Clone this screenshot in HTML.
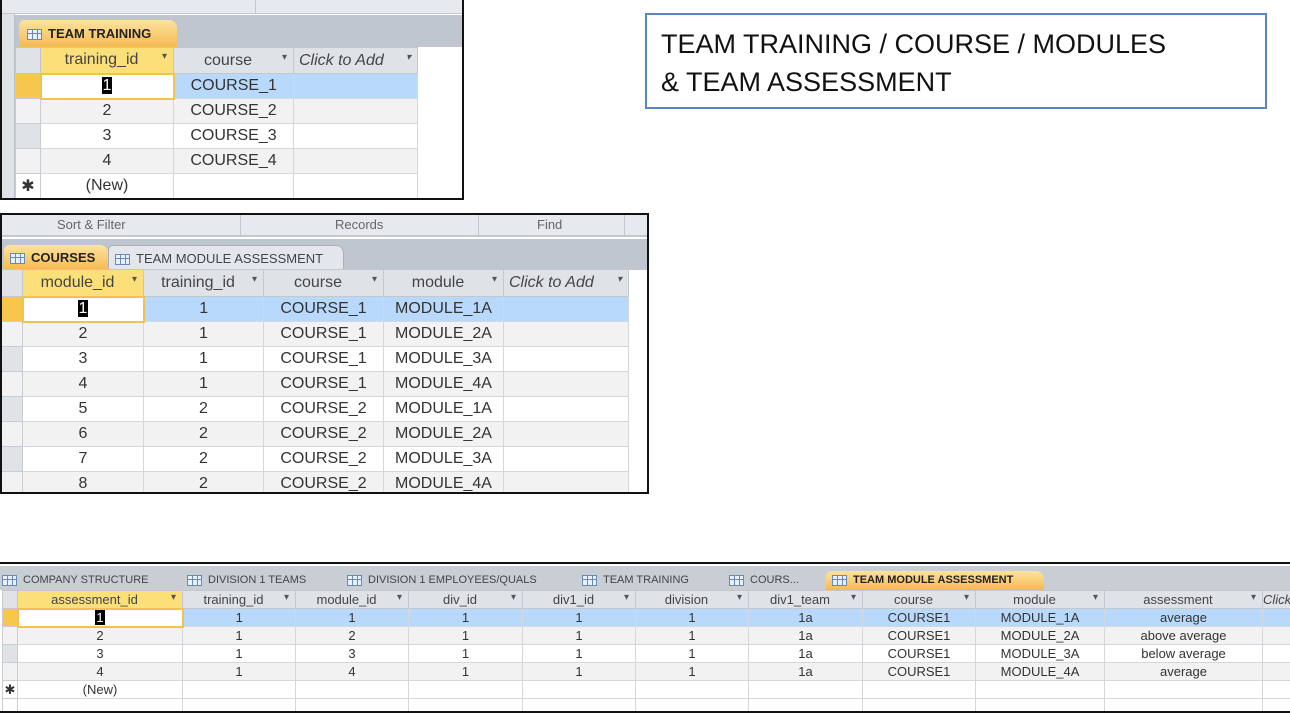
<!DOCTYPE html>
<html><head><meta charset="utf-8"><style>
*{margin:0;padding:0;box-sizing:border-box}
body{width:1290px;height:713px;background:#fff;position:relative;overflow:hidden;font-family:"Liberation Sans",sans-serif;color:#333}
.p{position:absolute;border:2px solid #111;overflow:hidden;background:#fff}
.a{position:absolute}
table{border-collapse:collapse;table-layout:fixed;position:absolute}
td{border:1px solid #d4d8dd;text-align:center;white-space:nowrap;overflow:hidden;padding:0}
tr.h td{background:#dfe3e8;border-color:#c4c8ce;color:#444}
tr.h td.y{background:#fbe07a}
tr.s td{background:#b8d9fb}
tr.s td.w{background:#fff;border:2px solid #f2c24e}
tr.g td{background:#f2f2f2}
td.sel{background:#dfe3e8;border-color:#c9cdd3}
tr.s td.sel{background:#f7c64d}
.dd{font-size:10px;color:#555;float:right;margin-right:6px}
.ico{display:inline-block;width:15px;height:11px;border:1px solid #6a8ab5;background:
linear-gradient(#6a8ab5 0 0) 0 3px/100% 1px no-repeat,linear-gradient(#6a8ab5 0 0) 4px 0/1px 100% no-repeat,linear-gradient(#6a8ab5 0 0) 9px 0/1px 100% no-repeat,#e8f0fb;vertical-align:middle;margin-right:6px}
.tabrow{position:absolute;background:#bfc6cf}
.tab{position:absolute;font-weight:bold;color:#222;white-space:nowrap;border-radius:5px 8px 0 0}
.tab.on{background:linear-gradient(#fce3a0,#f6b94f)}
.tab.off{background:#e3e7ec;font-weight:normal;color:#444;border:1px solid #a9b0ba;border-bottom:none}
.cur{background:#000;color:#fff;padding:0 1px}
</style></head><body>

<!-- Panel 1 -->
<div class="p" style="left:0;top:-2px;width:464px;height:202px">
  <div class="a" style="left:0;top:0;width:464px;height:14px;background:#e6e9ed;border-bottom:1px solid #c4c8ce"></div>
  <div class="a" style="left:253px;top:0;width:1px;height:14px;background:#c4c8ce"></div>
  <div class="a" style="left:0;top:14px;width:13px;height:190px;background:#dfe3e8;border-right:1px solid #b8bec6"></div>
  <div class="tabrow" style="left:13px;top:15px;width:451px;height:32px"></div>
  <div class="tab on" style="left:17px;top:20px;width:158px;height:27px;font-size:13px;line-height:27px;padding-left:8px"><span class="ico"></span>TEAM TRAINING</div>
  <table style="left:13px;top:47px;font-size:16px;width:462px">
    <colgroup><col style="width:25px"><col style="width:133px"><col style="width:120px"><col style="width:124px"><col style="width:60px"></colgroup>
    <tr class="h" style="height:26px"><td class="sel"></td><td class="y">training_id <span class="dd">▾</span></td><td>course <span class="dd">▾</span></td><td style="text-align:left;padding-left:5px;font-style:italic">Click to Add <span class="dd">▾</span></td><td style="background:#fff;border:none"></td></tr>
    <tr class="s" style="height:25px"><td class="sel"></td><td class="w"><span class="cur">1</span></td><td>COURSE_1</td><td></td><td style="background:#fff;border:none"></td></tr>
    <tr class="g" style="height:25px"><td class="sel"></td><td>2</td><td>COURSE_2</td><td></td><td style="background:#fff;border:none"></td></tr>
    <tr style="height:25px"><td class="sel"></td><td>3</td><td>COURSE_3</td><td></td><td style="border:none"></td></tr>
    <tr class="g" style="height:25px"><td class="sel"></td><td>4</td><td>COURSE_4</td><td></td><td style="background:#fff;border:none"></td></tr>
    <tr style="height:25px"><td class="sel" style="background:#fff">✱</td><td>(New)</td><td></td><td></td><td style="border:none"></td></tr>
  </table>
</div>

<!-- Title box -->
<div class="a" style="left:645px;top:13px;width:622px;height:96px;border:2px solid #5b84c0;font-size:27px;color:#111;letter-spacing:0;line-height:38px;padding:10px 0 0 14px">TEAM TRAINING / COURSE / MODULES<br>&amp; TEAM ASSESSMENT</div>

<!-- Panel 2 -->
<div class="p" style="left:0;top:213px;width:649px;height:281px">
  <div class="a" style="left:0;top:0;width:649px;height:22px;background:#e6e9ed;border-bottom:2px solid #c4c8ce;font-size:13px;color:#666;line-height:20px">
    <span class="a" style="left:55px">Sort &amp; Filter</span><span class="a" style="left:333px">Records</span><span class="a" style="left:535px">Find</span>
  </div>
  <div class="a" style="left:238px;top:0;width:1px;height:22px;background:#c4c8ce"></div>
  <div class="a" style="left:476px;top:0;width:1px;height:22px;background:#c4c8ce"></div>
  <div class="a" style="left:622px;top:0;width:1px;height:22px;background:#c4c8ce"></div>
  <div class="tabrow" style="left:0;top:24px;width:649px;height:31px"></div>
  <div class="tab on" style="left:2px;top:30px;width:104px;height:25px;font-size:13px;line-height:25px;padding-left:6px"><span class="ico"></span>COURSES</div>
  <div class="tab off" style="left:106px;top:30px;width:236px;height:25px;font-size:13px;line-height:25px;padding-left:6px"><span class="ico"></span>TEAM MODULE ASSESSMENT</div>
  <table style="left:-2px;top:54px;font-size:16px;width:653px">
    <colgroup><col style="width:22px"><col style="width:121px"><col style="width:120px"><col style="width:120px"><col style="width:120px"><col style="width:125px"><col style="width:25px"></colgroup>
    <tr class="h" style="height:27px"><td class="sel"></td><td class="y">module_id <span class="dd">▾</span></td><td>training_id <span class="dd">▾</span></td><td>course <span class="dd">▾</span></td><td>module <span class="dd">▾</span></td><td style="text-align:left;padding-left:5px;font-style:italic">Click to Add <span class="dd">▾</span></td><td style="background:#fff;border:none"></td></tr>
    <tr class="s" style="height:25px"><td class="sel"></td><td class="w"><span class="cur">1</span></td><td>1</td><td>COURSE_1</td><td>MODULE_1A</td><td></td><td style="background:#fff;border:none"></td></tr>
    <tr class="g" style="height:25px"><td class="sel"></td><td>2</td><td>1</td><td>COURSE_1</td><td>MODULE_2A</td><td></td><td style="background:#fff;border:none"></td></tr>
    <tr style="height:25px"><td class="sel"></td><td>3</td><td>1</td><td>COURSE_1</td><td>MODULE_3A</td><td></td><td style="border:none"></td></tr>
    <tr class="g" style="height:25px"><td class="sel"></td><td>4</td><td>1</td><td>COURSE_1</td><td>MODULE_4A</td><td></td><td style="background:#fff;border:none"></td></tr>
    <tr style="height:25px"><td class="sel"></td><td>5</td><td>2</td><td>COURSE_2</td><td>MODULE_1A</td><td></td><td style="border:none"></td></tr>
    <tr class="g" style="height:25px"><td class="sel"></td><td>6</td><td>2</td><td>COURSE_2</td><td>MODULE_2A</td><td></td><td style="background:#fff;border:none"></td></tr>
    <tr style="height:25px"><td class="sel"></td><td>7</td><td>2</td><td>COURSE_2</td><td>MODULE_3A</td><td></td><td style="border:none"></td></tr>
    <tr class="g" style="height:25px"><td class="sel"></td><td>8</td><td>2</td><td>COURSE_2</td><td>MODULE_4A</td><td></td><td style="background:#fff;border:none"></td></tr>
  </table>
</div>

<!-- Panel 3 -->
<div class="p" style="left:-2px;top:562px;width:1294px;height:151px">
  <div class="tabrow" style="left:0;top:2px;width:1294px;height:24px;background:#c9ced5"></div>
  <div class="a" style="top:6px;left:2px;height:20px;font-size:11px;line-height:20px;color:#444;white-space:nowrap">
    <span class="a" style="left:0"><span class="ico"></span>COMPANY STRUCTURE</span>
    <span class="a" style="left:185px"><span class="ico"></span>DIVISION 1 TEAMS</span>
    <span class="a" style="left:345px"><span class="ico"></span>DIVISION 1 EMPLOYEES/QUALS</span>
    <span class="a" style="left:580px"><span class="ico"></span>TEAM TRAINING</span>
    <span class="a" style="left:727px"><span class="ico"></span>COURS...</span>
  </div>
  <div class="tab on" style="left:826px;top:7px;width:218px;height:19px;font-size:11px;line-height:19px;padding-left:6px"><span class="ico"></span>TEAM MODULE ASSESSMENT</div>
  <table style="left:2px;top:26px;font-size:13px;width:1282px">
    <colgroup><col style="width:15px"><col style="width:165px"><col style="width:113px"><col style="width:113px"><col style="width:114px"><col style="width:113px"><col style="width:113px"><col style="width:114px"><col style="width:113px"><col style="width:129px"><col style="width:158px"><col style="width:40px"></colgroup>
    <tr class="h" style="height:18px"><td class="sel"></td><td class="y">assessment_id <span class="dd">▾</span></td><td>training_id <span class="dd">▾</span></td><td>module_id <span class="dd">▾</span></td><td>div_id <span class="dd">▾</span></td><td>div1_id <span class="dd">▾</span></td><td>division <span class="dd">▾</span></td><td>div1_team <span class="dd">▾</span></td><td>course <span class="dd">▾</span></td><td>module <span class="dd">▾</span></td><td>assessment <span class="dd">▾</span></td><td style="text-align:left;font-style:italic">Click</td></tr>
    <tr class="s" style="height:18px"><td class="sel"></td><td class="w"><span class="cur">1</span></td><td>1</td><td>1</td><td>1</td><td>1</td><td>1</td><td>1a</td><td>COURSE1</td><td>MODULE_1A</td><td>average</td><td></td></tr>
    <tr class="g" style="height:18px"><td class="sel"></td><td>2</td><td>1</td><td>2</td><td>1</td><td>1</td><td>1</td><td>1a</td><td>COURSE1</td><td>MODULE_2A</td><td>above average</td><td></td></tr>
    <tr style="height:18px"><td class="sel"></td><td>3</td><td>1</td><td>3</td><td>1</td><td>1</td><td>1</td><td>1a</td><td>COURSE1</td><td>MODULE_3A</td><td>below average</td><td></td></tr>
    <tr class="g" style="height:18px"><td class="sel"></td><td>4</td><td>1</td><td>4</td><td>1</td><td>1</td><td>1</td><td>1a</td><td>COURSE1</td><td>MODULE_4A</td><td>average</td><td></td></tr>
    <tr style="height:18px"><td class="sel" style="background:#fff">✱</td><td>(New)</td><td></td><td></td><td></td><td></td><td></td><td></td><td></td><td></td><td></td><td></td></tr>
    <tr style="height:18px"><td class="sel" style="background:#fff"></td><td></td><td></td><td></td><td></td><td></td><td></td><td></td><td></td><td></td><td></td><td></td></tr>
  </table>
</div>
</body></html>
